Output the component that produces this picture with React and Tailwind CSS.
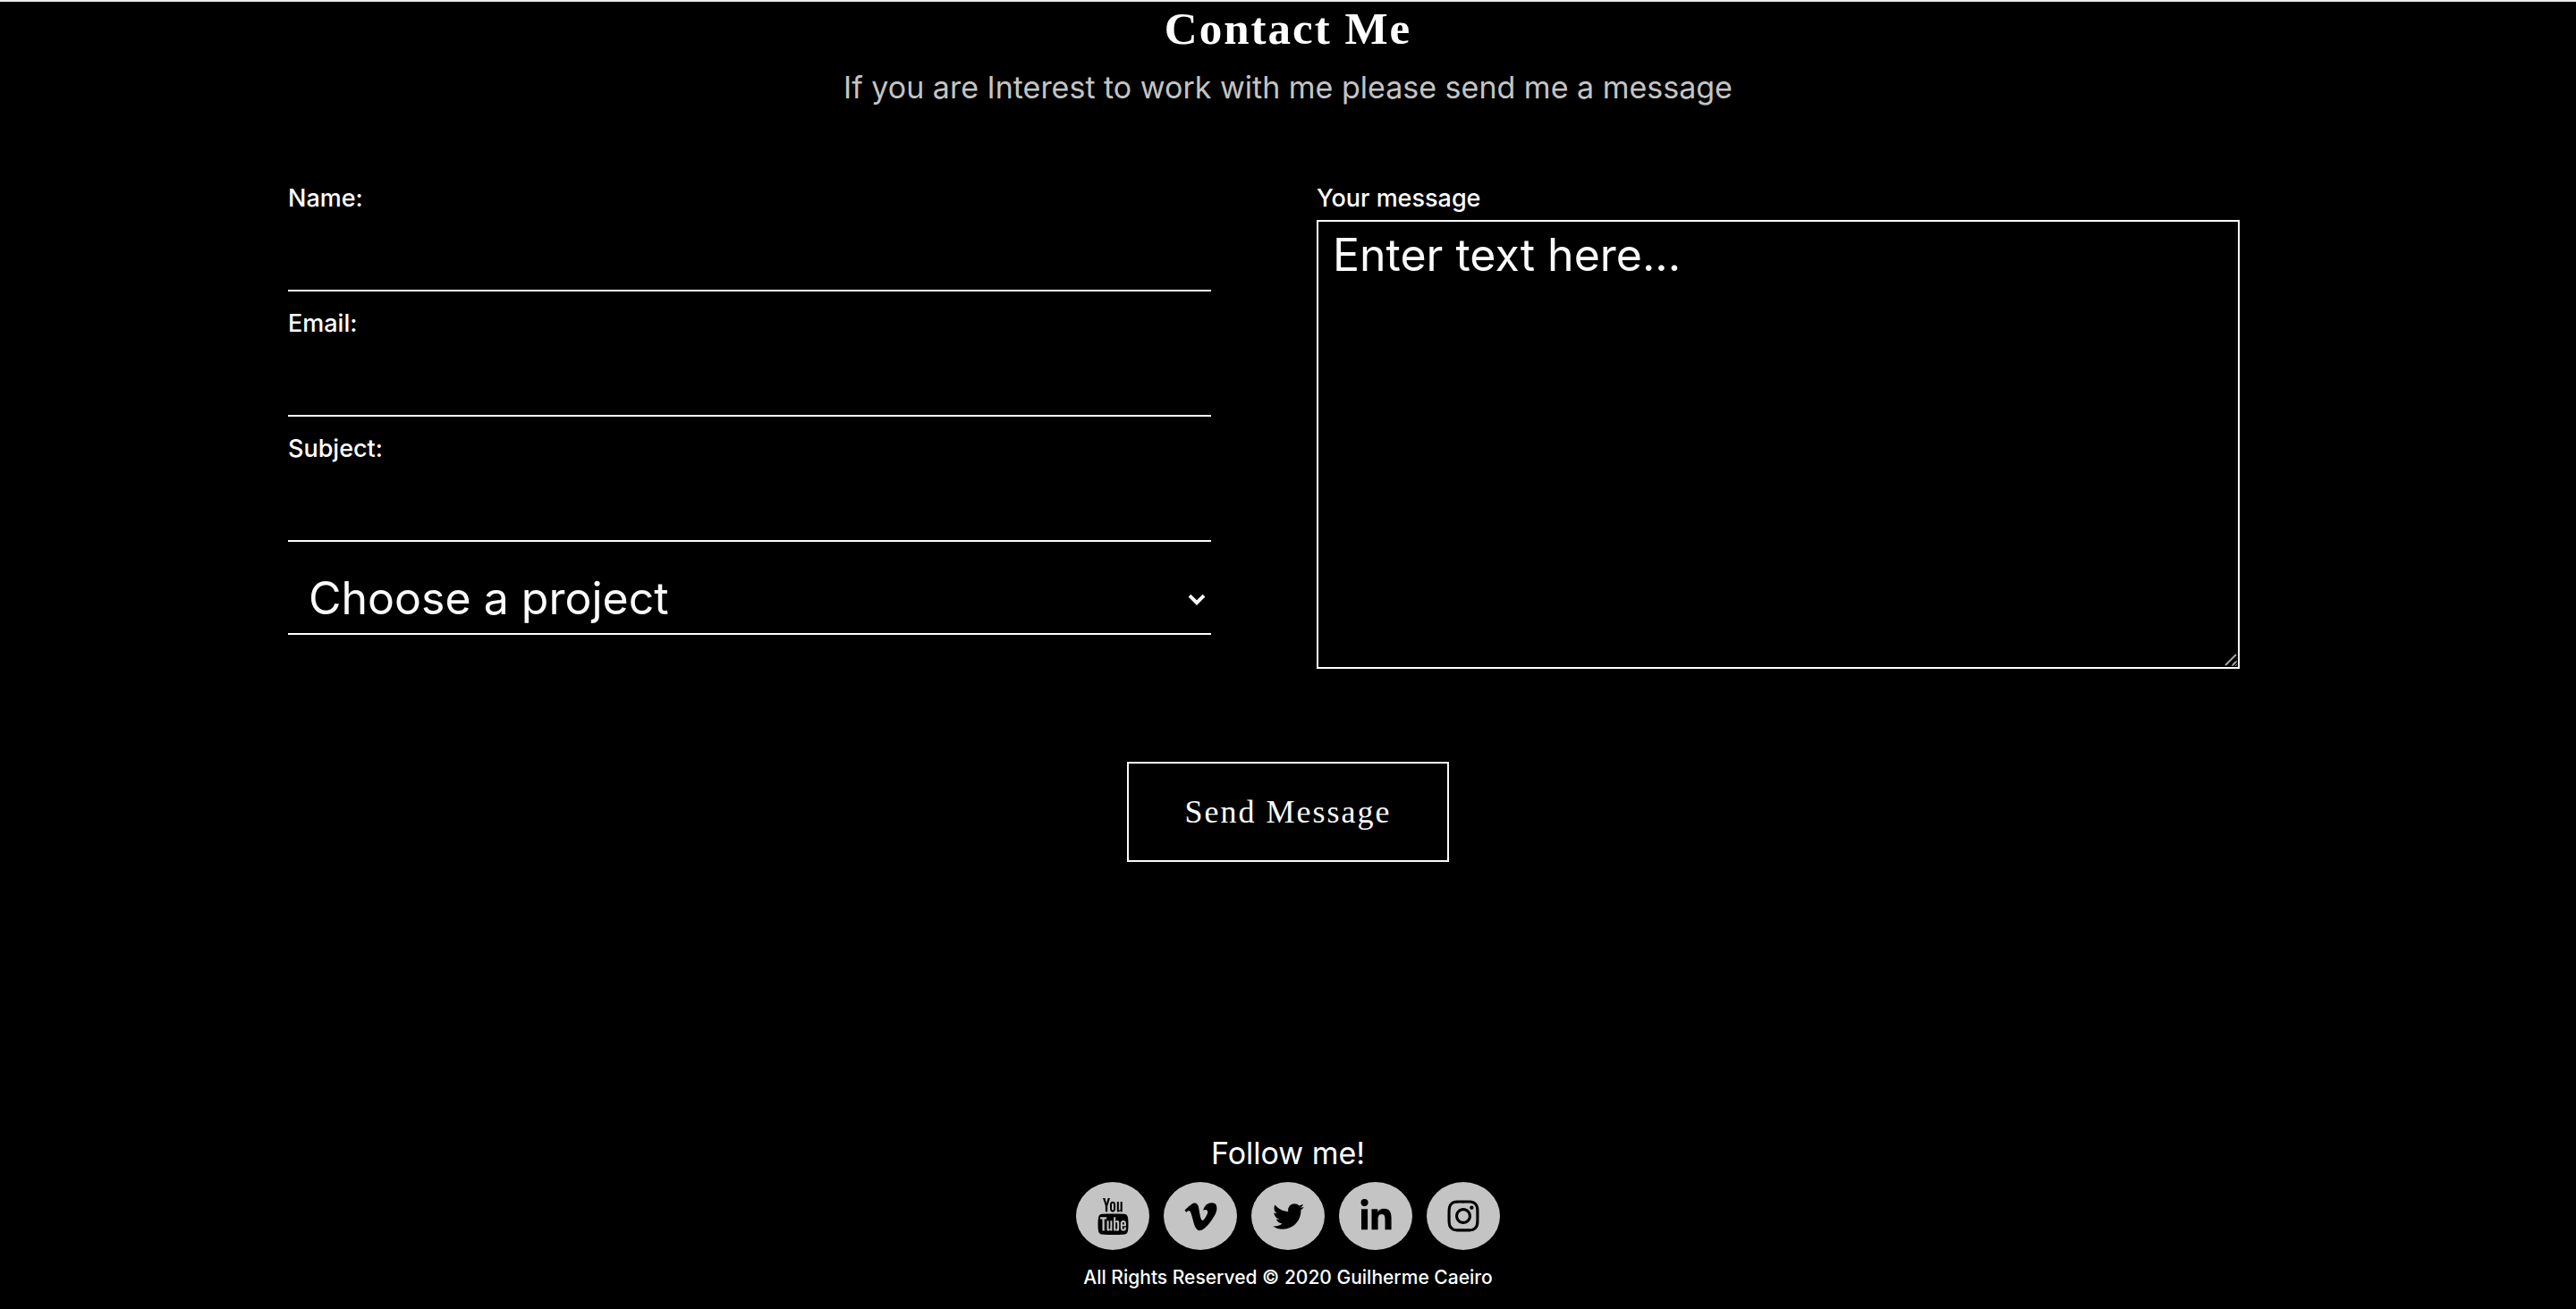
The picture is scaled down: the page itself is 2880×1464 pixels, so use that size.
import { FaVimeoV, FaTwitter, FaLinkedinIn, FaInstagram } from "react-icons/fa";
import { TfiYoutube } from "react-icons/tfi";

const FIELDS = [
  { id: "name", label: "Name:", type: "text" },
  { id: "email", label: "Email:", type: "email" },
  { id: "subject", label: "Subject:", type: "text" },
];

const SOCIALS = [
  { name: "YouTube", Icon: TfiYoutube, size: 41 },
  { name: "Vimeo", Icon: FaVimeoV, size: 41 },
  { name: "Twitter", Icon: FaTwitter, size: 35 },
  { name: "LinkedIn", Icon: FaLinkedinIn, size: 39 },
  { name: "Instagram", Icon: FaInstagram, size: 40 },
];

function Field({ id, label, type }) {
  return (
    <div className="flex flex-col">
      <label htmlFor={id} className="text-[27px] leading-10 font-medium">
        {label}
      </label>
      <input
        id={id}
        name={id}
        type={type}
        className="h-[84px] w-full border-b-2 border-white bg-transparent px-4 text-[50px] outline-none"
      />
    </div>
  );
}

function ProjectSelect() {
  return (
    <div className="relative">
      <select
        aria-label="Choose a project"
        defaultValue=""
        className="h-[88px] w-full appearance-none border-b-2 border-white bg-black pt-2 pr-12 pl-[23px] text-[50px] text-[#fbfbfb] outline-none"
      >
        <option value="">Choose a project</option>
        <option value="web">Web design</option>
        <option value="video">Video</option>
      </select>
      <svg
        viewBox="0 0 20 14"
        className="pointer-events-none absolute right-1.5 bottom-8 h-3.5 w-5"
        fill="none"
        stroke="#fbfbfb"
        strokeWidth="4"
        aria-hidden="true"
      >
        <path d="M2 2.2 10 10.2 18 2.2" />
      </svg>
    </div>
  );
}

function MessageBox() {
  return (
    <div className="flex flex-col gap-1">
      <label htmlFor="message" className="text-[27px] leading-10 font-medium">
        Your message
      </label>
      <div className="relative">
        <textarea
          id="message"
          name="message"
          placeholder="Enter text here..."
          className="block h-[502px] w-full resize border-2 border-white bg-black px-4 py-2 text-[50px] leading-[58px] text-[#fbfbfb] outline-none placeholder:text-[#fbfbfb]"
        />
        <svg
          viewBox="0 0 14 14"
          className="pointer-events-none absolute right-[3px] bottom-[3px] size-3.5"
          stroke="#a3a3a3"
          strokeWidth="2"
          aria-hidden="true"
        >
          <path d="M1 13 13 1M9 13 13 9" />
        </svg>
      </div>
    </div>
  );
}

export default function App() {
  return (
    <div className="flex min-h-screen flex-col border-t-2 border-[#e9ecef] bg-black font-['Inter',sans-serif] text-white">
      <header className="flex flex-col items-center text-center">
        <h2 className="font-['Liberation_Serif',serif] text-[51px] leading-[60px] font-bold tracking-[2px]">
          Contact Me
        </h2>
        <p className="mt-4 text-[34px] leading-10 text-[#c4c4c4]">
          If you are Interest to work with me please send me a message
        </p>
      </header>

      <form className="mt-21 flex flex-col items-center" onSubmit={(e) => e.preventDefault()}>
        <div className="grid w-full grid-cols-2 gap-x-[118px] pr-[376px] pl-[322px]">
          <div className="flex flex-col gap-4">
            {FIELDS.map((field) => (
              <Field key={field.id} {...field} />
            ))}
            <ProjectSelect />
          </div>
          <MessageBox />
        </div>
        <button
          type="submit"
          className="mt-26 h-28 w-[360px] border-2 border-[#fbfbfb] font-['Liberation_Serif',serif] text-[36px] tracking-[2px] text-[#fbfbfb]"
        >
          Send Message
        </button>
      </form>

      <footer className="mt-auto flex flex-col items-center pb-5">
        <p className="text-[34px] leading-10">Follow me!</p>
        <nav aria-label="Social media" className="mt-3 flex gap-4">
          {SOCIALS.map(({ name, Icon, size }) => (
            <a
              key={name}
              href={`#${name.toLowerCase()}`}
              aria-label={name}
              className="flex h-[76px] w-[82px] items-center justify-center rounded-[50%] bg-[#c4c4c4] text-black"
            >
              <Icon size={size} />
            </a>
          ))}
        </nav>
        <p className="mt-4 text-[21px] leading-[30px] font-medium">
          All Rights Reserved © 2020 Guilherme Caeiro
        </p>
      </footer>
    </div>
  );
}
